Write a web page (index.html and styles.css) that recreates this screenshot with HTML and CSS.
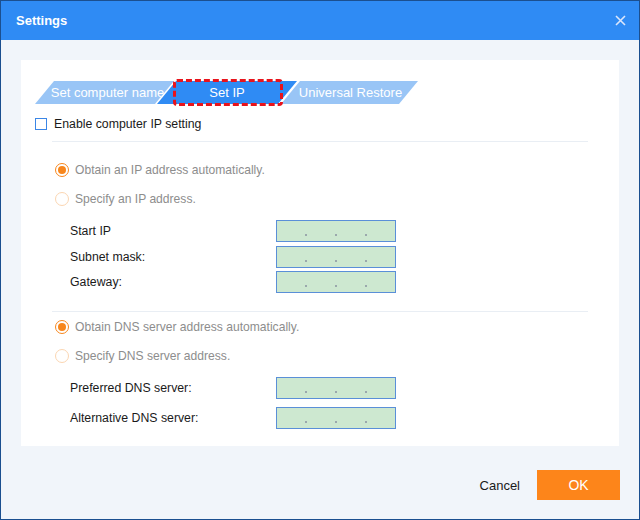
FILE: index.html
```html
<!DOCTYPE html>
<html lang="en">
<head>
    <meta charset="UTF-8">
    <title>Settings</title>
    <link rel="stylesheet" href="styles.css">
</head>
<body>
    <div class="dialog">
        <div class="title-bar">
            <span class="title">Settings</span>
            <svg class="close-icon" width="11" height="11" viewBox="0 0 11 11">
                <path d="M1 1 L10 10 M10 1 L1 10" stroke="#dbe6fb" stroke-width="1.6" fill="none"/>
            </svg>
        </div>

        <div class="content">
            <div class="panel">
                <div class="tabs">
                    <div class="tab tab-first">Set computer name</div>
                    <div class="tab tab-active">Set IP</div>
                    <div class="tab tab-last">Universal Restore</div>
                    <div class="tab-focus"></div>
                </div>

                <label class="check-row">
                    <span class="checkbox"></span>
                    <span>Enable computer IP setting</span>
                </label>

                <div class="divider"></div>

                <div class="section">
                    <div class="radio-row first">
                        <span class="radio checked"></span>
                        <span>Obtain an IP address automatically.</span>
                    </div>
                    <div class="radio-row">
                        <span class="radio"></span>
                        <span>Specify an IP address.</span>
                    </div>

                    <div class="field-row gap-top">
                        <span class="field-label">Start IP</span>
                        <div class="ip-box"><i></i><i></i><i></i></div>
                    </div>
                    <div class="field-row gap-4">
                        <span class="field-label">Subnet mask:</span>
                        <div class="ip-box"><i></i><i></i><i></i></div>
                    </div>
                    <div class="field-row gap-3">
                        <span class="field-label">Gateway:</span>
                        <div class="ip-box"><i></i><i></i><i></i></div>
                    </div>
                </div>

                <div class="divider divider-2"></div>

                <div class="section">
                    <div class="radio-row dns-first">
                        <span class="radio checked"></span>
                        <span>Obtain DNS server address automatically.</span>
                    </div>
                    <div class="radio-row">
                        <span class="radio"></span>
                        <span>Specify DNS server address.</span>
                    </div>

                    <div class="field-row gap-top">
                        <span class="field-label">Preferred DNS server:</span>
                        <div class="ip-box"><i></i><i></i><i></i></div>
                    </div>
                    <div class="field-row gap-8">
                        <span class="field-label">Alternative DNS server:</span>
                        <div class="ip-box"><i></i><i></i><i></i></div>
                    </div>
                </div>
            </div>

            <div class="footer">
                <span class="cancel-btn">Cancel</span>
                <button class="ok-btn">OK</button>
            </div>
        </div>
    </div>
</body>
</html>
```

FILE: styles.css
```css
* {
    margin: 0;
    padding: 0;
    box-sizing: border-box;
}

body {
    font-family: "Liberation Sans", Arial, sans-serif;
    font-size: 12.3px;
    color: #1a1a1a;
}

.dialog {
    width: 640px;
    height: 520px;
    border: 1px solid #1b4f8f;
    background: #f1f5fa;
    display: flex;
    flex-direction: column;
}

.title-bar {
    height: 39px;
    background: #2f8bf4;
    display: flex;
    align-items: center;
    justify-content: space-between;
    padding: 0 13px 0 15px;
}

.title {
    color: white;
    font-weight: bold;
    font-size: 13px;
}

.close-icon {
    display: block;
}

.content {
    padding: 20px 19px 19px 20px;
    flex: 1;
    display: flex;
    flex-direction: column;
}

.panel {
    background: white;
    height: 386px;
    width: 598px;
    padding: 21px 14px 0 14px;
}

/* tabs */
.tabs {
    position: relative;
    display: flex;
    height: 23px;
}

.tab {
    height: 23px;
    line-height: 23px;
    color: white;
    font-size: 13px;
    text-align: center;
    background: #99c5f6;
    clip-path: polygon(19px 0, 100% 0, calc(100% - 19px) 100%, 0 100%);
}

.tab-first {
    width: 139px;
    padding-left: 6px;
}

.tab-active {
    width: 140px;
    margin-left: -17px;
    background: #2f8bf4;
}

.tab-last {
    width: 137px;
    margin-left: -16px;
    padding-left: 2px;
}

.tab-focus {
    position: absolute;
    left: 138px;
    top: -2px;
    width: 110px;
    height: 27px;
    border: 3px dashed #e8141c;
    border-radius: 4px;
}

/* checkbox */
.check-row {
    display: flex;
    align-items: center;
    gap: 7px;
    margin-top: 13px;
    height: 14px;
}

.checkbox {
    width: 12px;
    height: 12px;
    border: 1px solid #3b86e6;
    background: white;
}

.divider {
    height: 1px;
    background: #e9eef4;
    margin: 10px 17px 0 17px;
}

.divider-2 {
    margin-top: 18px;
}

/* radios */
.section {
    padding-left: 20px;
}

.radio-row {
    display: flex;
    align-items: center;
    gap: 6px;
    height: 14px;
    margin-top: 15px;
    color: #8d8d8d;
    font-size: 12.1px;
}

.radio-row.first {
    margin-top: 21px;
}

.radio-row.dns-first {
    margin-top: 8px;
}

.radio {
    width: 14px;
    height: 14px;
    border-radius: 50%;
    border: 1px solid #fbd6b2;
    background: white;
    display: flex;
    align-items: center;
    justify-content: center;
}

.radio.checked {
    border: 1.5px solid #f7861c;
}

.radio.checked::after {
    content: "";
    width: 8px;
    height: 8px;
    border-radius: 50%;
    background: #f7861c;
}

/* ip fields */
.field-row {
    display: flex;
    align-items: center;
    padding-left: 15px;
}

.field-row.gap-top {
    margin-top: 14px;
}

.field-row.gap-4 {
    margin-top: 4px;
}

.field-row.gap-3 {
    margin-top: 3px;
}

.field-row.gap-8 {
    margin-top: 8px;
}

.field-label {
    width: 206px;
}

.ip-box {
    width: 120px;
    height: 22px;
    background: #cde8d0;
    border: 1px solid #5a8fd8;
    display: flex;
    justify-content: center;
    gap: 28px;
    padding-top: 13px;
}

.ip-box i {
    width: 2px;
    height: 2px;
    background: #9aa8ac;
}

/* footer */
.footer {
    margin-top: 24px;
    display: flex;
    justify-content: flex-end;
    align-items: center;
    gap: 17px;
}

.cancel-btn {
    font-size: 13px;
    color: #1a1a1a;
}

.ok-btn {
    width: 83px;
    height: 30px;
    background: #fd851a;
    border: none;
    color: white;
    font-family: "Liberation Sans", Arial, sans-serif;
    font-size: 14px;
}
```
